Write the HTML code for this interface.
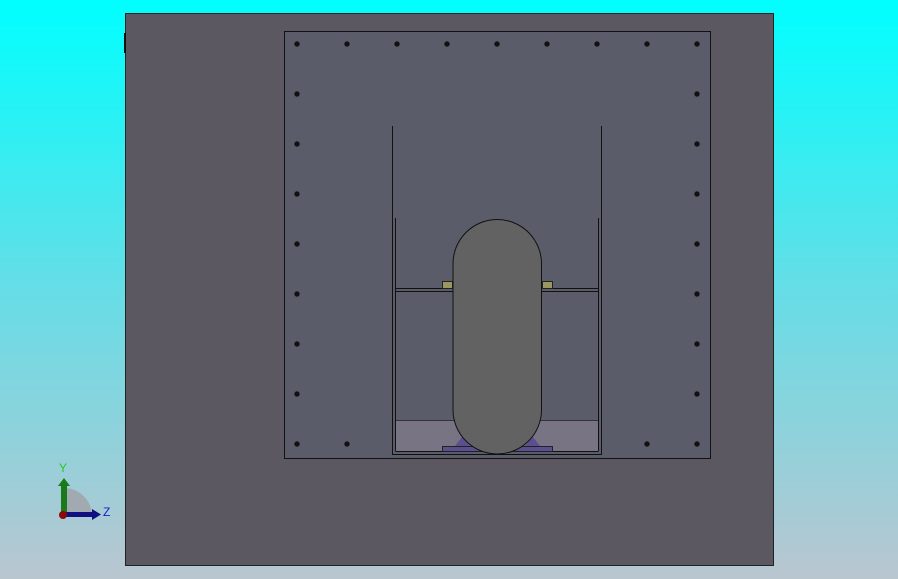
<!DOCTYPE html><html><head><style>
body{margin:0;width:898px;height:579px;overflow:hidden;background:linear-gradient(#00ffff,#66dde6 50%,#b9c6d0);}
</style></head><body>
<svg width="898" height="579" style="position:absolute;left:0;top:0">
<rect x="125.5" y="13.5" width="648" height="552" fill="#5c5862" stroke="#222" stroke-width="1"/>
<rect x="124" y="33" width="2" height="20" fill="#111"/>
<rect x="284.5" y="31.5" width="426" height="427" fill="#5a5c6a" stroke="#111" stroke-width="1"/>
<rect x="396" y="420" width="202" height="31" fill="#787484"/>
<g fill="none" stroke="#111" stroke-width="1">
<path d="M392.5,126 V454.5 H601.5 V126"/>
<line x1="395.5" y1="218" x2="395.5" y2="451"/>
<line x1="598.5" y1="218" x2="598.5" y2="451"/>
<line x1="395.5" y1="451.5" x2="598.5" y2="451.5"/>
<line x1="395" y1="288.5" x2="599" y2="288.5"/>
<line x1="395" y1="291.5" x2="599" y2="291.5"/>
<line x1="396" y1="420.5" x2="598" y2="420.5" stroke="#333"/>
</g>
<rect x="442.5" y="281.5" width="10" height="7" fill="#9a9860" stroke="#222"/>
<rect x="542.5" y="281.5" width="10" height="7" fill="#9a9860" stroke="#222"/>
<polygon points="455,446 462,437 470,446" fill="#5a5090"/>
<polygon points="525,446 533,437 540,446" fill="#5a5090"/>
<rect x="442.5" y="446.5" width="110" height="5" fill="#5a5090" stroke="#222"/>
<rect x="453" y="219.5" width="88.5" height="234.5" rx="44.25" ry="44.25" fill="#626262" stroke="#111"/>
<g fill="#111" stroke="#5a5c6a" stroke-width="0.6">
<circle cx="297" cy="44" r="3"/><circle cx="347" cy="44" r="3"/><circle cx="397" cy="44" r="3"/><circle cx="447" cy="44" r="3"/><circle cx="497" cy="44" r="3"/><circle cx="547" cy="44" r="3"/><circle cx="597" cy="44" r="3"/><circle cx="647" cy="44" r="3"/><circle cx="697" cy="44" r="3"/>
<circle cx="297" cy="94" r="3"/><circle cx="297" cy="144" r="3"/><circle cx="297" cy="194" r="3"/><circle cx="297" cy="244" r="3"/><circle cx="297" cy="294" r="3"/><circle cx="297" cy="344" r="3"/><circle cx="297" cy="394" r="3"/><circle cx="297" cy="444" r="3"/>
<circle cx="697" cy="94" r="3"/><circle cx="697" cy="144" r="3"/><circle cx="697" cy="194" r="3"/><circle cx="697" cy="244" r="3"/><circle cx="697" cy="294" r="3"/><circle cx="697" cy="344" r="3"/><circle cx="697" cy="394" r="3"/><circle cx="697" cy="444" r="3"/>
<circle cx="347" cy="444" r="3"/><circle cx="647" cy="444" r="3"/>
</g>
<path d="M64,488 A28,28 0 0 1 92,515 L64,515Z" fill="#a0aab0"/>
<rect x="61" y="484" width="6" height="31" fill="#1a7a1a"/>
<polygon points="58,486 64,478 70,486" fill="#1a7a1a"/>
<rect x="64" y="512" width="28" height="5" fill="#101080"/>
<polygon points="92,509 101,514.5 92,520" fill="#101080"/>
<circle cx="63" cy="515" r="4" fill="#8a0a0a"/>
<text x="59" y="472" font-family="Liberation Sans,sans-serif" font-size="12" fill="#22cc22">Y</text>
<text x="103" y="516" font-family="Liberation Sans,sans-serif" font-size="12" fill="#1a1acc">Z</text>
</svg>
</body></html>
